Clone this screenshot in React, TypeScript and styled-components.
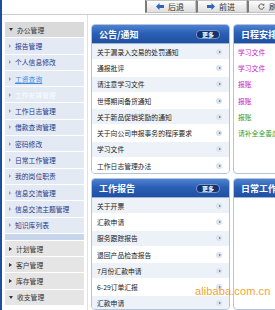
import styled, { createGlobalStyle } from 'styled-components';

const Global = createGlobalStyle`
  html, body {
    margin: 0;
    padding: 0;
    background: #fff;
  }
  body {
    font-family: "Noto Sans CJK SC", "Liberation Sans", sans-serif;
  }
`;

const Page = styled.div`
  position: relative;
  width: 273px;
  height: 310px;
  overflow: hidden;
  border-left: 2px solid #1d4f9e;
  display: flex;
  flex-direction: column;
`;

const Toolbar = styled.div`
  height: 14px;
  flex: none;
  display: flex;
  padding-left: 143px;
  border-bottom: 1px solid #c9ccd1;
  white-space: nowrap;
`;

const ToolButton = styled.div`
  flex: none;
  width: 51px;
  height: 13px;
  box-sizing: border-box;
  display: flex;
  align-items: center;
  gap: 4px;
  padding-left: 9px;
  background: linear-gradient(#fdfdfd, #dedede);
  border: 1px solid #c2c2c2;
  border-left: 2px solid #7c7c7c;
  font-size: 8px;
  color: #333;
`;

const Body = styled.div`
  flex: 1;
  display: flex;
  min-height: 0;
`;

const Sidebar = styled.div`
  flex: none;
  width: 79px;
  padding: 7px 3px 0 3px;
  border-right: 1px solid #dde1e7;
  display: flex;
  flex-direction: column;
`;

const GroupHead = styled.div<{ $open?: boolean; $dark?: boolean }>`
  height: 15.3px;
  flex: none;
  display: flex;
  align-items: center;
  padding-left: 4px;
  gap: 4px;
  background: ${(p) => (p.$dark ? '#dadada' : '#e5e5e5')};
  border-bottom: 1px solid #fff;
  font-size: 6.8px;
  color: #333;

  &::before {
    content: '';
    width: 0;
    height: 0;
    ${(p) =>
      p.$open
        ? 'border-left: 2px solid transparent; border-right: 2px solid transparent; border-top: 3px solid #333;'
        : 'border-top: 2px solid transparent; border-bottom: 2px solid transparent; border-left: 3px solid #333;'}
  }
`;

const SideItem = styled.div<{ $tone?: 'link' | 'active' }>`
  height: 15.3px;
  flex: none;
  display: flex;
  align-items: center;
  padding-left: 4px;
  gap: 4px;
  background: #e3eaf4;
  border-bottom: 1px solid #fff;
  font-size: 6.8px;
  color: ${(p) => (p.$tone === 'link' ? '#3f8de0' : p.$tone === 'active' ? '#fafcff' : '#26398a')};
  text-decoration: ${(p) => (p.$tone === 'link' ? 'underline' : 'none')};

  &::before {
    content: '';
    width: 0;
    height: 0;
    border-top: 2px solid transparent;
    border-bottom: 2px solid transparent;
    border-left: 2px solid #8796b8;
  }
`;

const Band = styled.div`
  height: 6px;
  flex: none;
  background: #c7d6ed;
  border-bottom: 1px solid #fff;
`;

const Main = styled.div`
  flex: 1;
  padding: 9px 0 0 3px;
  display: grid;
  grid-template-columns: 139px 139px;
  grid-template-rows: 150px 1fr;
  column-gap: 3px;
  row-gap: 4px;
`;

const Panel = styled.div`
  border: 1px solid #b2c3dc;
  border-radius: 4px;
  overflow: hidden;
  background: #fff;
`;

const PanelHead = styled.div`
  height: 18px;
  display: flex;
  align-items: center;
  justify-content: space-between;
  padding: 0 9px 0 7px;
  background: linear-gradient(#4f82d2 0%, #2b60b6 45%, #1f4f9f 100%);
  border-bottom: 1px solid #9db4d8;
  color: #fff;
  font-size: 9px;
  font-weight: bold;
`;

const More = styled.span`
  height: 7px;
  line-height: 7px;
  padding: 0 5px;
  border-radius: 4px;
  background: #15326c;
  border: 1px solid #7794cc;
  font-size: 6px;
  font-weight: bold;
  color: #fff;
`;

const Row = styled.div<{ $alt?: boolean }>`
  height: 15.3px;
  display: flex;
  align-items: center;
  justify-content: space-between;
  padding: 0 7px 0 5px;
  background: ${(p) => (p.$alt ? '#ffffff' : '#edf1f8')};
  border-bottom: 1px solid #fff;
  font-size: 6.8px;
  color: #222;
  white-space: nowrap;
`;

const Note = styled.div<{ $color?: string }>`
  height: 15.3px;
  display: flex;
  align-items: center;
  padding-left: 4px;
  border-bottom: 1px solid #fff;
  font-size: 6.8px;
  color: ${(p) => p.$color || '#222'};
  white-space: nowrap;
`;

const Go = styled.span`
  flex: none;
  width: 6px;
  height: 6px;
  border-radius: 50%;
  background: #dbe3ee;
  display: flex;
  align-items: center;
  justify-content: center;

  &::after {
    content: '';
    margin-left: 1px;
    border-top: 1.5px solid transparent;
    border-bottom: 1.5px solid transparent;
    border-left: 2px solid #4d6ea6;
  }
`;

const Mark = styled.div`
  position: absolute;
  left: 193px;
  top: 285px;
  font-family: "Liberation Sans", Arial, sans-serif;
  font-size: 11px;
  color: #f39a12;
  opacity: 0.9;
  letter-spacing: 0.1px;
`;

const notices = [
  '关于漏录入交易的处罚通知',
  '通报批评',
  '请注意学习文件',
  '世博期间备货通知',
  '关于新品促销奖励的通知',
  '关于向公司申报事务的程序要求',
  '学习文件',
  '工作日志管理办法',
];

const schedule = [
  { text: '学习文件', color: '#c61cc6' },
  { text: '学习文件', color: '#c61cc6' },
  { text: '报账', color: '#c61cc6' },
  { text: '报账', color: '#c61cc6' },
  { text: '报账', color: '#2f9b2f' },
  { text: '请补全全善虎滨的报告', color: '#2f9b2f' },
];

const reports = ['关于开票', '汇款申请', '服务跟踪报告', '退回产品检查报告', '7月份汇款申请', '6-29订单汇报', '汇款申请'];

const officeItems: { label: string; tone?: 'link' | 'active' }[] = [
  { label: '报告管理' },
  { label: '个人信息修改' },
  { label: '工资查询', tone: 'link' },
  { label: '工作安排管理', tone: 'active' },
  { label: '工作日志管理' },
  { label: '借款查询管理' },
  { label: '密码修改' },
  { label: '日常工作管理' },
  { label: '我的岗位职责' },
  { label: '信息交流管理' },
  { label: '信息交流主题管理' },
  { label: '知识库列表' },
];

function BackIcon() {
  return (
    <svg width="8" height="7" viewBox="0 0 8 7">
      <polygon points="0,3.5 3.5,0 3.5,2 8,2 8,5 3.5,5 3.5,7" fill="#2f64b8" />
    </svg>
  );
}

function ForwardIcon() {
  return (
    <svg width="8" height="7" viewBox="0 0 8 7">
      <polygon points="8,3.5 4.5,0 4.5,2 0,2 0,5 4.5,5 4.5,7" fill="#2f64b8" />
    </svg>
  );
}

function RefreshIcon() {
  return (
    <svg width="7" height="7" viewBox="0 0 7 7">
      <path d="M5.6 2.2 A2.6 2.6 0 1 0 6 4" fill="none" stroke="#555" strokeWidth="1" />
      <polygon points="4.4,2.4 6.4,2.6 6.2,0.6" fill="#555" />
    </svg>
  );
}

export default function App() {
  return (
    <>
      <Global />
      <Page>
        <Toolbar>
          <ToolButton>
            <BackIcon />
            后退
          </ToolButton>
          <ToolButton>
            <ForwardIcon />
            前进
          </ToolButton>
          <ToolButton>
            <RefreshIcon />
            刷新
          </ToolButton>
        </Toolbar>
        <Body>
          <Sidebar>
            <GroupHead $open $dark>办公管理</GroupHead>
            {officeItems.map((it) => (
              <SideItem key={it.label} $tone={it.tone}>
                {it.label}
              </SideItem>
            ))}
            <Band />
            <GroupHead>计划管理</GroupHead>
            <GroupHead>客户管理</GroupHead>
            <GroupHead>库存管理</GroupHead>
            <GroupHead $open>收支管理</GroupHead>
          </Sidebar>
          <Main>
            <Panel>
              <PanelHead>
                公告/通知
                <More>更多</More>
              </PanelHead>
              {notices.map((n, i) => (
                <Row key={i} $alt={i % 2 === 1}>
                  {n}
                  <Go />
                </Row>
              ))}
            </Panel>
            <Panel>
              <PanelHead>日程安排</PanelHead>
              {schedule.map((s, i) => (
                <Note key={i} $color={s.color}>
                  {s.text}
                </Note>
              ))}
            </Panel>
            <Panel>
              <PanelHead>
                工作报告
                <More>更多</More>
              </PanelHead>
              {reports.map((r, i) => (
                <Row key={i} $alt={i % 2 === 1}>
                  {r}
                  <Go />
                </Row>
              ))}
            </Panel>
            <Panel>
              <PanelHead>日常工作</PanelHead>
            </Panel>
          </Main>
        </Body>
        <Mark>alibaba.com.cn</Mark>
      </Page>
    </>
  );
}
